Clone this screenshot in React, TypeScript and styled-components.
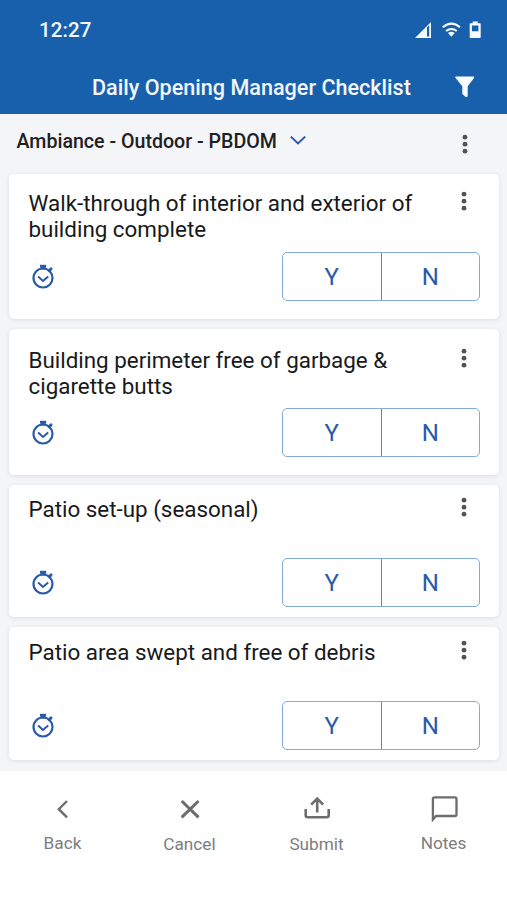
import React from "react";
import styled, { createGlobalStyle } from "styled-components";

const blue = "#1960ac";
const ink = "#2a5ba8";

const GlobalStyle = createGlobalStyle`
  * { box-sizing: border-box; }
  body { margin: 0; background: #fff; font-family: Roboto, "Noto Sans", sans-serif; }
  svg { display: block; flex: none; }
  button { font: inherit; padding: 0; border: 0; background: none; color: inherit; }
`;

const Screen = styled.div`
  width: 507px;
  height: 900px;
  display: flex;
  flex-direction: column;
  background: #f3f5f7;
  overflow: hidden;
`;

const Header = styled.header`
  height: 114px;
  flex: none;
  background: ${blue};
  color: #f2f7fd;
  font-weight: 500;
`;

const StatusBar = styled.div`
  height: 60px;
  padding: 0 26px 0 39px;
  display: flex;
  align-items: center;
  justify-content: space-between;
`;

const Clock = styled.span`
  font-size: 20.5px;
  letter-spacing: 0.1px;
`;

const StatusIcons = styled.div`
  display: flex;
  align-items: center;
`;

const TitleBar = styled.div`
  height: 54px;
  padding: 0 31px 0 92px;
  display: flex;
  align-items: center;
  justify-content: space-between;
`;

const Title = styled.h1`
  margin: 0;
  padding-top: 1px;
  font-size: 21.6px;
  line-height: 53px;
  font-weight: 500;
  white-space: nowrap;
`;

const SectionBar = styled.div`
  height: 60px;
  flex: none;
  display: flex;
  justify-content: space-between;
  padding: 0 33px 0 16.5px;
`;

const SectionName = styled.button`
  display: flex;
  align-items: center;
  height: 54px;
  gap: 13px;
  font-size: 19.6px;
  font-weight: 500;
  color: #1e2022;
  white-space: nowrap;
`;

const MenuButton = styled.button<{ $top: number }>`
  height: 21px;
  width: 19px;
  margin-top: ${(p) => p.$top}px;
  display: flex;
  justify-content: center;
`;

const List = styled.main`
  flex: none;
  height: 597px;
  padding: 0 8.5px;
  display: flex;
  flex-direction: column;
  gap: 10px;
`;

const Card = styled.article<{ $height: number; $top: number; $bottom: number }>`
  height: ${(p) => p.$height}px;
  flex: none;
  padding: ${(p) => p.$top}px 18.5px ${(p) => p.$bottom}px 20px;
  display: flex;
  flex-direction: column;
  justify-content: space-between;
  background: #fff;
  border-radius: 5px;
  box-shadow: 0 1px 4px rgba(60, 70, 80, 0.13);
`;

const CardTop = styled.div`
  display: flex;
  justify-content: space-between;
  margin-right: 6.5px;
`;

const Task = styled.p`
  margin: 0;
  width: 400px;
  font-size: 22.4px;
  line-height: 26px;
  color: #17191b;
`;

const CardBottom = styled.div`
  display: flex;
  align-items: center;
  justify-content: space-between;
`;

const Answers = styled.div`
  width: 198px;
  height: 49px;
  display: flex;
  border: 1px solid #85abda;
  border-radius: 5px;
`;

const Divider = styled.span`
  width: 1px;
  background: #5287cb;
`;

const Answer = styled.button`
  flex: 1;
  font-size: 24px;
  line-height: 49px;
  color: ${ink};
`;

const Nav = styled.nav`
  flex: 1;
  display: grid;
  grid-template-columns: repeat(4, 127px);
  margin-left: -1px;
  background: #fff;
`;

const NavItem = styled.button<{ $drop: number }>`
  display: flex;
  flex-direction: column;
  align-items: center;
  padding-top: 22px;
  color: #6b6d70;
  font-size: 17.2px;
  line-height: 20px;
  span { margin-top: ${(p) => 8 + p.$drop}px; color: #7b7d80; }
`;

const Dots = () => (
  <svg width="6" height="21" viewBox="0 0 6 21" fill="#505255">
    <circle cx="3" cy="3.2" r="2.4" />
    <circle cx="3" cy="10.2" r="2.4" />
    <circle cx="3" cy="17.2" r="2.4" />
  </svg>
);

const Stopwatch = () => (
  <svg width="28" height="28" viewBox="0 0 28 28" fill="none" stroke={ink}>
    <circle cx="14" cy="15" r="9.5" strokeWidth="2.2" />
    <path d="M11 3.2h6.2" strokeWidth="2.8" />
    <path d="M14.1 3.5v3" strokeWidth="4.4" />
    <path d="m20.2 7.7 1.8-1.8" strokeWidth="3" strokeLinecap="round" />
    <path d="m9.1 13.4 4.9 4.6 5.2-4.6" strokeWidth="2" />
  </svg>
);

const Status = () => (
  <StatusIcons>
    <svg width="66" height="20" viewBox="0 0 66 20" fill="#f6fbff">
      <path fillRule="evenodd" d="M0 18 16 2v16ZM12 7.4v9.1h2.2V5.2Z" />
      <path d="M36.3 16.8 33 13q3.4-2.5 6.7 0Z" />
      <g fill="none" stroke="#f6fbff" strokeWidth="2">
        <path d="M31 11q5.4-3.9 10.8 0M27.8 7.2q8.6-7.2 17.2 0" />
      </g>
      <path fillRule="evenodd" d="M55.5 3.2h2.2V1.5h5v1.7h2.2q.8 0 .8.8v13.2q0 .8-.8.8h-9.4q-.8 0-.8-.8V4q0-.8.8-.8Zm1.4 2.4v5.6h6.5V5.6Z" />
    </svg>
  </StatusIcons>
);

const Funnel = () => (
  <svg width="22" height="24" viewBox="0 0 22 24" fill="#f9fcff">
    <path d="M1.8 1.5h18q.8.3.2 1.4l-6.3 8.4v9.5q0 1.2-1.2 1.2h-.8L8.3 19v-7.7L1.4 2.8Q.9 1.7 1.8 1.5Z" />
  </svg>
);

const stroke = { fill: "none", stroke: "currentColor", strokeWidth: 2.4 };

const navItems = [
  { label: "Back", drop: 0, icon: <path d="M20 8 11.8 16.2l8.2 8.2" {...stroke} /> },
  { label: "Cancel", drop: 1, icon: <path d="m7.7 8 16.8 16.4m0-16.4L7.7 24.4" {...stroke} strokeWidth={3} /> },
  {
    label: "Submit",
    drop: 1,
    icon: <path d="M4.7 16v6.3q0 2 2 2h19q2 0 2-2V16M16.2 19.5V5.5M10.2 11.7l6-6.2 6 6.2" {...stroke} strokeWidth={2.6} />,
  },
  {
    label: "Notes",
    drop: 0,
    icon: <path d="M4.9 26.5V6q0-1.6 1.6-1.6h20.4q1.6 0 1.6 1.6v15.4q0 1.6-1.6 1.6H8Z" {...stroke} strokeWidth={2.3} />,
  },
];

const tasks = [
  { text: "Walk-through of interior and exterior of building complete", height: 145, top: 16, bottom: 18 },
  { text: "Building perimeter free of garbage & cigarette butts", height: 146, top: 18, bottom: 18 },
  { text: "Patio set-up (seasonal)", height: 132, top: 11, bottom: 10 },
  { text: "Patio area swept and free of debris", height: 133, top: 12, bottom: 10 },
];

export default function App() {
  return (
    <Screen>
      <GlobalStyle />
      <Header>
        <StatusBar>
          <Clock>12:27</Clock>
          <Status />
        </StatusBar>
        <TitleBar>
          <Title>Daily Opening Manager Checklist</Title>
          <Funnel />
        </TitleBar>
      </Header>
      <SectionBar>
        <SectionName>
          Ambiance - Outdoor - PBDOM
          <svg width="16" height="10" viewBox="0 0 16 10" fill="none" stroke={ink} strokeWidth="2">
            <path d="m.8 .6 7.2 6.8 7.2-6.8" />
          </svg>
        </SectionName>
        <MenuButton $top={20} aria-label="Section menu"><Dots /></MenuButton>
      </SectionBar>
      <List>
        {tasks.map((task) => (
          <Card key={task.text} $height={task.height} $top={task.top} $bottom={task.bottom}>
            <CardTop>
              <Task>{task.text}</Task>
              <MenuButton $top={1} aria-label="Task menu"><Dots /></MenuButton>
            </CardTop>
            <CardBottom>
              <Stopwatch />
              <Answers>
                <Answer>Y</Answer>
                <Divider />
                <Answer>N</Answer>
              </Answers>
            </CardBottom>
          </Card>
        ))}
      </List>
      <Nav>
        {navItems.map((item) => (
          <NavItem key={item.label} $drop={item.drop}>
            <svg width="32" height="32" viewBox="0 0 32 32">{item.icon}</svg>
            <span>{item.label}</span>
          </NavItem>
        ))}
      </Nav>
    </Screen>
  );
}
